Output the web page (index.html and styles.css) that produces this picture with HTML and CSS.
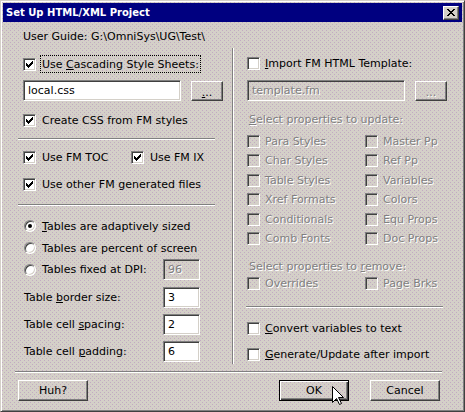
FILE: index.html
```html
<!DOCTYPE html>
<html>
<head>
<meta charset="utf-8">
<title>Set Up HTML/XML Project</title>
<link rel="stylesheet" href="styles.css">
</head>
<body>
<div class="window">
  <div class="titlebar">
    <span class="title">Set Up HTML/XML Project</span>
    <span class="close"><svg width="8" height="7" viewBox="0 0 8 7"><path fill="#000" d="M0 0h2v1H0zM6 0h2v1H6zM1 1h2v1H1zM5 1h2v1H5zM2 2h4v1H2zM3 3h2v1H3zM2 4h4v1H2zM1 5h2v1H1zM5 5h2v1H5zM0 6h2v1H0zM6 6h2v1H6z"/></svg></span>
  </div>
  <div class="client">
    <div class="guide">User Guide: G:\OmniSys\UG\Test\</div>
    <div class="cols">
      <div class="col left">
        <div class="row row-css">
          <span class="cb on"><svg width="7" height="7" viewBox="0 0 7 7"><path fill="#000" d="M0 2h1v3H0zM1 3h1v3H1zM2 4h1v3H2zM3 3h1v3H3zM4 2h1v3H4zM5 1h1v3H5zM6 0h1v3H6z"/></svg></span>
          <span class="focus"><span>Use <u>C</u>ascading Style Sheets:</span></span>
        </div>
        <div class="field-row fr-left">
          <span class="tf">local.css</span>
          <span class="btn dots"><span><u>.</u>..</span></span>
        </div>
        <div class="row row-create">
          <span class="cb on"><svg width="7" height="7" viewBox="0 0 7 7"><path fill="#000" d="M0 2h1v3H0zM1 3h1v3H1zM2 4h1v3H2zM3 3h1v3H3zM4 2h1v3H4zM5 1h1v3H5zM6 0h1v3H6z"/></svg></span>
          <span>Create CSS from FM styles</span>
        </div>
        <div class="sep sep-left sep-a"></div>
        <div class="row row-toc">
          <span class="pair toc">
            <span class="cb on"><svg width="7" height="7" viewBox="0 0 7 7"><path fill="#000" d="M0 2h1v3H0zM1 3h1v3H1zM2 4h1v3H2zM3 3h1v3H3zM4 2h1v3H4zM5 1h1v3H5zM6 0h1v3H6z"/></svg></span>
            <span>Use FM TOC</span>
          </span>
          <span class="pair">
            <span class="cb on"><svg width="7" height="7" viewBox="0 0 7 7"><path fill="#000" d="M0 2h1v3H0zM1 3h1v3H1zM2 4h1v3H2zM3 3h1v3H3zM4 2h1v3H4zM5 1h1v3H5zM6 0h1v3H6z"/></svg></span>
            <span>Use FM IX</span>
          </span>
        </div>
        <div class="row row-other">
          <span class="cb on"><svg width="7" height="7" viewBox="0 0 7 7"><path fill="#000" d="M0 2h1v3H0zM1 3h1v3H1zM2 4h1v3H2zM3 3h1v3H3zM4 2h1v3H4zM5 1h1v3H5zM6 0h1v3H6z"/></svg></span>
          <span>Use other FM generated files</span>
        </div>
        <div class="sep sep-left sep-b"></div>
        <div class="rrow rrow-1">
          <span class="rb on"></span><span><u>T</u>ables are adaptively sized</span>
        </div>
        <div class="rrow rrow-2">
          <span class="rb"></span><span>Tables are percent of screen</span>
        </div>
        <div class="numrow numrow-dpi">
          <span class="lbl"><span class="rb"></span><span>Tables fixed at DPI:</span></span>
          <span class="num disabled"><span class="dis">96</span></span>
        </div>
        <div class="numrow numrow-border">
          <span class="lbl plain">Table <u>b</u>order size:</span>
          <span class="num">3</span>
        </div>
        <div class="numrow numrow-next">
          <span class="lbl plain">Table cell <u>s</u>pacing:</span>
          <span class="num">2</span>
        </div>
        <div class="numrow numrow-next">
          <span class="lbl plain">Table cell <u>p</u>adding:</span>
          <span class="num">6</span>
        </div>
      </div>
      <div class="col right">
        <div class="row row-import">
          <span class="cb"></span>
          <span><u>I</u>mport FM HTML Template:</span>
        </div>
        <div class="field-row fr-right">
          <span class="tf disabled"><span class="dis">template.fm</span></span>
          <span class="btn dots"><span class="dis">...</span></span>
        </div>
        <div class="caption cap-update dis"><u>S</u>elect properties to update:</div>
        <div class="props">
          <span class="prop"><span class="cb off"></span><span class="dis">Para Styles</span></span>
          <span class="prop"><span class="cb off"></span><span class="dis">Master Pp</span></span>
          <span class="prop"><span class="cb off"></span><span class="dis">Char Styles</span></span>
          <span class="prop"><span class="cb off"></span><span class="dis">Ref Pp</span></span>
          <span class="prop"><span class="cb off"></span><span class="dis">Table Styles</span></span>
          <span class="prop"><span class="cb off"></span><span class="dis">Variables</span></span>
          <span class="prop"><span class="cb off"></span><span class="dis">Xref Formats</span></span>
          <span class="prop"><span class="cb off"></span><span class="dis">Colors</span></span>
          <span class="prop"><span class="cb off"></span><span class="dis">Conditionals</span></span>
          <span class="prop"><span class="cb off"></span><span class="dis">Equ Props</span></span>
          <span class="prop"><span class="cb off"></span><span class="dis">Comb Fonts</span></span>
          <span class="prop"><span class="cb off"></span><span class="dis">Doc Props</span></span>
        </div>
        <div class="caption cap-remove dis">Select properties to <u>r</u>emove:</div>
        <div class="props props-remove">
          <span class="prop"><span class="cb off"></span><span class="dis">Overrides</span></span>
          <span class="prop"><span class="cb off"></span><span class="dis">Page Brks</span></span>
        </div>
        <div class="sep sep-right"></div>
        <div class="row row-convert">
          <span class="cb"></span>
          <span><u>C</u>onvert variables to text</span>
        </div>
        <div class="row row-generate">
          <span class="cb"></span>
          <span><u>G</u>enerate/Update after import</span>
        </div>
      </div>
    </div>
    <div class="hr"></div>
    <div class="buttons">
      <span class="btn push">Huh?</span>
      <span class="btn push ok">OK</span>
      <span class="btn push">Cancel</span>
    </div>
  </div>
  <svg class="cursor" width="13" height="20" viewBox="0 0 13 20"><path d="M0.5 0.5V16.5L4.5 12.5L7.5 18.5L9.5 17.5L6.5 11.5H11.5Z" fill="#fff" stroke="#000" stroke-width="1" stroke-linejoin="miter"/></svg>
</div>
</body>
</html>
```
FILE: styles.css
```css
* { box-sizing: border-box; }
html, body { margin: 0; padding: 0; }
body {
  width: 465px;
  height: 412px;
  overflow: hidden;
  background: #d4d0c8;
  font-family: "DejaVu Sans", Tahoma, sans-serif;
  font-size: 11px;
  line-height: 13px;
  color: #000;
}
u { text-decoration: underline; text-underline-offset: 1px; }

.window {
  position: relative;
  width: 465px;
  height: 412px;
  padding: 2px;
  border: 1px solid;
  border-color: #d4d0c8 #404040 #404040 #d4d0c8;
  box-shadow: inset 1px 1px #fff, inset -1px -1px #808080;
  background-color: #d4d0c8;
  background-image:
    conic-gradient(at 1px 1px, #0000 75%, #c2aac2 0),
    conic-gradient(at 1px 1px, #0000 75%, #c2aac2 0);
  background-size: 4px 4px, 4px 4px;
  background-position: 1px 1px, 3px 3px;
}

/* title bar */
.titlebar {
  display: flex;
  align-items: center;
  height: 19px;
  padding-left: 3px;
  background: #000080;
  color: #fff;
}
.title { font-weight: bold; font-size: 10px; white-space: nowrap; }
.close {
  margin-left: auto;
  margin-right: 3px;
  width: 16px;
  height: 14px;
  padding: 2px 0 0 3px;
  background: #d4d0c8;
  border: 1px solid;
  border-color: #fff #404040 #404040 #fff;
  box-shadow: inset -1px -1px #808080;
}
.close svg { display: block; }

/* client */
.guide { margin: 8px 0 5px 20px; height: 13px; white-space: nowrap; }
.cols { display: flex; height: 316px; }
.left { width: 230px; flex: none; border-right: 1px solid #808080; padding-left: 20px; }
.right { flex: 1; border-left: 1px solid #fff; padding-left: 13px; }

.row { display: flex; align-items: center; height: 19px; white-space: nowrap; }

.cb {
  flex: none;
  width: 13px;
  height: 13px;
  border: 1px solid;
  border-color: #808080 #fff #fff #808080;
  box-shadow: inset 1px 1px #404040, inset -1px -1px #d4d0c8;
  background: #fff;
  margin-right: 6px;
}
.cb svg { display: block; margin: 2px 0 0 2px; }
.cb.off { background: transparent; }
.right .cb { margin-right: 5px; }

.dis { color: #808080; text-shadow: 1px 1px 0 #fff; }

/* left column */
.row-css { margin-top: 7px; align-items: flex-start; }
.row-css .cb { margin-top: 3px; margin-right: 4px; }
.focus {
  display: flex;
  align-items: center;
  height: 18px;
  padding: 0 1px;
  border: 1px dotted #000;
  white-space: pre;
}

.field-row { display: flex; align-items: flex-start; height: 21px; }
.fr-left { margin-top: 6px; }
.fr-right { margin-top: 7px; }
.tf {
  display: flex;
  align-items: center;
  width: 158px;
  height: 21px;
  padding-left: 4px;
  border: 1px solid;
  border-color: #808080 #fff #fff #808080;
  box-shadow: inset 1px 1px #404040, inset -1px -1px #d4d0c8;
  background: #fff;
}
.tf.disabled, .num.disabled { background: transparent; }

.btn {
  display: flex;
  align-items: center;
  justify-content: center;
  border: 1px solid;
  border-color: #fff #404040 #404040 #fff;
  box-shadow: inset -1px -1px #808080;
  white-space: nowrap;
}
.btn.dots { width: 32px; height: 20px; margin: 1px 0 0 10px; padding-top: 2px; }

.row-create { margin-top: 10px; }
.sep { height: 2px; border-top: 1px solid #808080; border-bottom: 1px solid #fff; width: 197px; }
.sep-left { margin-left: -5px; }
.sep-a { margin-top: 8px; }
.row-toc { margin-top: 8px; }
.pair { display: flex; align-items: center; }
.pair.toc { width: 108px; }
.row-other { margin-top: 8px; }
.sep-b { margin-top: 10px; }

.rrow { display: flex; align-items: center; height: 18px; white-space: nowrap; }
.rrow-1 { margin-top: 11px; }
.rrow-2 { margin-top: 4px; }
.rb {
  flex: none;
  display: flex;
  align-items: center;
  justify-content: center;
  width: 12px;
  height: 12px;
  margin: 0 6px 0 1px;
  border-radius: 50%;
  border: 1px solid;
  border-color: #808080 #fff #fff #808080;
  box-shadow: inset 1px 1px #404040, inset -1px -1px #d4d0c8;
  background: #fff;
}
.rb.on::after { content: ""; width: 4px; height: 4px; border-radius: 50%; background: #000; }

.numrow { display: flex; align-items: center; height: 21px; white-space: nowrap; }
.numrow-dpi { margin-top: 2px; }
.numrow-border { margin-top: 7px; }
.numrow-next { margin-top: 6px; }
.lbl { display: flex; align-items: center; width: 140px; }
.lbl.plain { padding-left: 1px; display: block; }
.num {
  display: flex;
  align-items: center;
  width: 37px;
  height: 21px;
  padding-left: 4px;
  border: 1px solid;
  border-color: #808080 #fff #fff #808080;
  box-shadow: inset 1px 1px #404040, inset -1px -1px #d4d0c8;
  background: #fff;
}

/* right column */
.row-import { margin-top: 6px; }
.caption { height: 13px; white-space: nowrap; padding-left: 2px; }
.cap-update { margin-top: 12px; }
.cap-remove { margin-top: 12px; }
.props {
  display: grid;
  grid-template-columns: 118px auto;
  grid-template-rows: 20px 19px 20px 19px 20px 19px;
  margin-top: 5px;
}
.props-remove { grid-template-rows: 19px; margin-top: 1px; }
.prop { display: flex; align-items: center; white-space: nowrap; }
.sep-right { margin-top: 13px; margin-left: -1px; }
.row-convert { margin-top: 11px; }
.row-generate { margin-top: 7px; }

/* bottom */
.hr { margin: 7px 0 0 12px; width: 427px; height: 2px; border-top: 1px solid #808080; border-bottom: 1px solid #fff; }
.buttons { display: flex; margin-top: 7px; padding: 0 22px 0 15px; }
.btn.push { width: 70px; height: 21px; }
.btn.ok {
  margin-left: auto;
  margin-right: 21px;
  border-color: #000;
  box-shadow: inset 1px 1px #fff, inset -1px -1px #404040, inset -2px -2px #808080;
}

.cursor { position: absolute; left: 331px; top: 385px; }
```
